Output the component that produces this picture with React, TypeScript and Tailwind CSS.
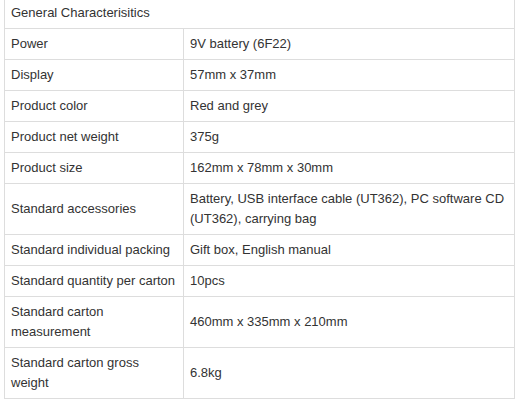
const rows: [string, string][] = [
  ['Power', '9V battery (6F22)'],
  ['Display', '57mm x 37mm'],
  ['Product color', 'Red and grey'],
  ['Product net weight', '375g'],
  ['Product size', '162mm x 78mm x 30mm'],
  ['Standard accessories', 'Battery, USB interface cable (UT362), PC software CD (UT362), carrying bag'],
  ['Standard individual packing', 'Gift box, English manual'],
  ['Standard quantity per carton', '10pcs'],
  ['Standard carton measurement', '460mm x 335mm x 210mm'],
  ['Standard carton gross weight', '6.8kg'],
];

export default function App() {
  return (
    <div className="min-h-screen bg-white pl-[4px] text-[13px] leading-[20px] text-[#333]" style={{ fontFamily: '"Liberation Sans", Arial, sans-serif' }}>
      <table className="w-[511px] table-fixed border-collapse">
        <colgroup>
          <col className="w-[179px]" />
          <col />
        </colgroup>
        <tbody>
          <tr>
            <td colSpan={2} className="border border-t-0 border-[#ddd] px-[6px] pt-[3px] pb-[5px]">
              General Characterisitics
            </td>
          </tr>
          {rows.map(([k, v]) => (
            <tr key={k}>
              <td className="border border-[#ddd] pl-[6px] pr-[4px] py-[5px] align-middle">{k}</td>
              <td className="border border-[#ddd] px-[6px] py-[5px] align-middle">{v}</td>
            </tr>
          ))}
        </tbody>
      </table>
    </div>
  );
}
